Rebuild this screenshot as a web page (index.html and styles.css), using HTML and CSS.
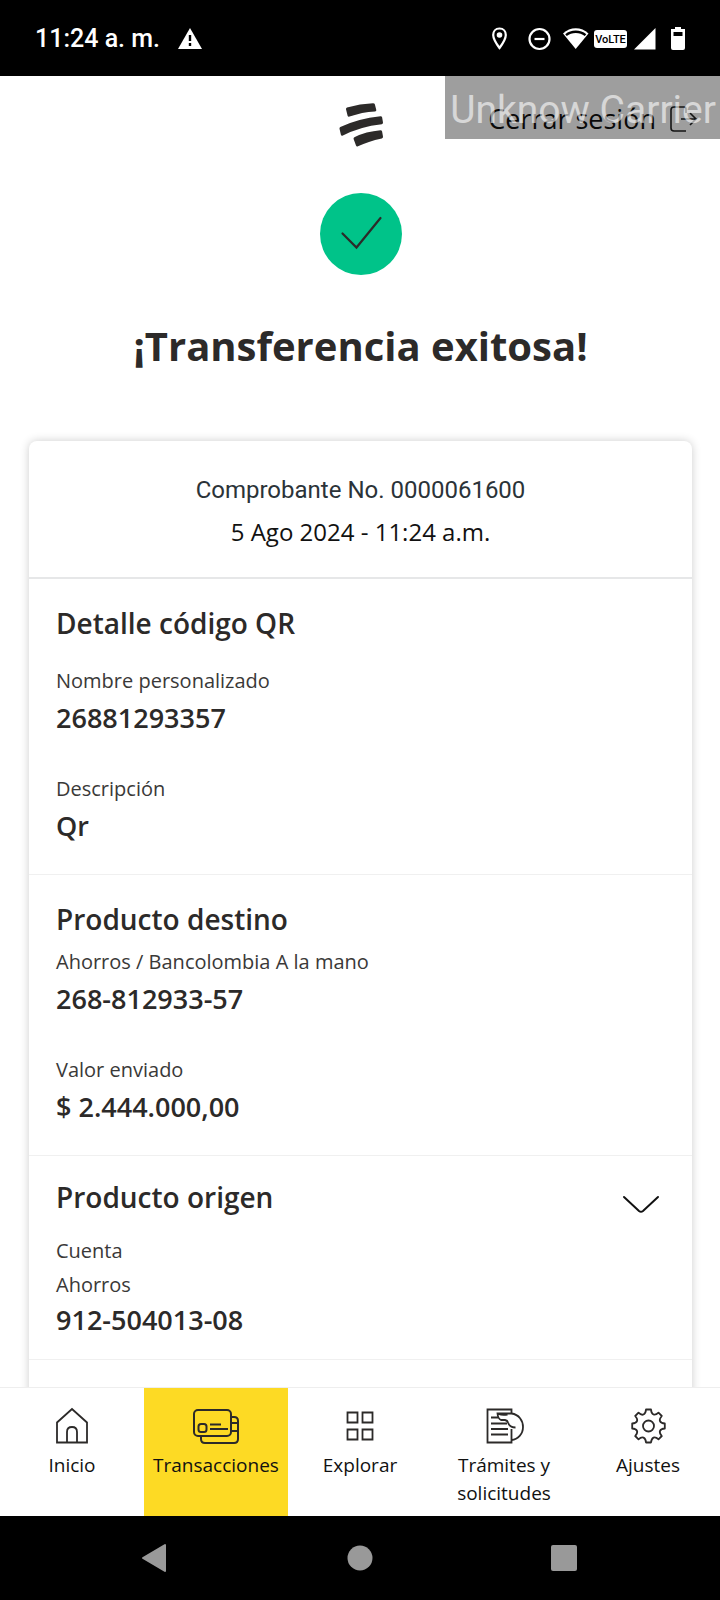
FILE: index.html
```html
<!DOCTYPE html>
<html lang="es">
<head>
<meta charset="utf-8">
<meta name="viewport" content="width=device-width, initial-scale=1">
<title>Transferencia exitosa</title>
<link rel="stylesheet" href="styles.css">
</head>
<body>
<div class="status-bar">
  <span class="status-time">11:24 a. m.</span>
  <svg class="status-warning" width="24" height="22" viewBox="0 0 24 22"><path d="M12 0L24 21H0Z" fill="#fff"/><path d="M12 7v6M12 15v3" stroke="#000" stroke-width="2.4"/></svg>
  <div class="status-icons">
    <svg width="164" height="24" viewBox="0 0 164 24" fill="none">
      <path d="M7.500 1.500C3.500 1.500 1.200 4.500 1.200 8c0 4.500 6.300 13 6.300 13s6.300-8.500 6.300-13c0-3.500-2.300-6.500-6.300-6.500z" stroke="#fff" stroke-width="2.200"/>
      <circle cx="7.500" cy="8" r="2.800" fill="#fff"/>
      <circle cx="47.500" cy="12" r="10" stroke="#fff" stroke-width="2.200"/><path d="M42.500 12h10" stroke="#fff" stroke-width="2.200"/>
      <path d="M71 6.500C78-.500 89.500-.500 96.500 6.500L83.700 22Z" fill="#fff"/><path d="M74 8.200C79.500 3.600 88 3.600 93.500 8.200" stroke="#000" stroke-width="2.400"/>
      <rect x="102" y="3" width="33" height="18" rx="3" fill="#fff"/>
      <text x="118.500" y="16" text-anchor="middle" class="volte" fill="#000">VoLTE</text>
      <path d="M142 22.500L163.500 1V22.500Z" fill="#fff"/>
    </svg>
    <svg width="14" height="24" viewBox="0 0 14 24"><path d="M4 0h6v2h4v19q0 2-2 2H2q-2 0-2-2V2h4z" fill="#fff"/><path d="M2.500 5h9v4h-9z" fill="#000"/></svg>
  </div>
</div>

<header class="app-header">
  <svg class="logo" width="46" height="46" viewBox="0 0 46 46" fill="#2c2a29">
    <path d="M9 5.500Q22 1.500 35 1.200Q36.600 1.200 36.900 2.500L38.300 8Q38.500 9.400 37 9.500Q24 10.200 11.500 14.600Q10 15 9.600 13.700L8 7.200Q7.800 6 9 5.500Z"/>
    <path d="M2.300 25Q20 16.500 42.500 14.200Q43.800 14.100 44.100 15.300L45 20.600Q45.200 22 43.800 22.200Q22 24.500 4.900 33.600Q3.300 34.300 2.900 32.800L1.500 26.700Q1.300 25.500 2.300 25Z"/>
    <path d="M16.400 35.200Q28 29.500 42.500 28.300Q43.800 28.300 44.100 29.400L45 34.600Q45.200 36 43.800 36.400Q30 39.400 20 44.300Q18.500 45 18 43.600L15.600 37Q15.300 35.800 16.400 35.200Z"/>
  </svg>
  <a class="logout" href="#">Cerrar sesión
    <svg width="28" height="28" viewBox="0 0 28 28" fill="none" stroke="#222" stroke-width="1.600"><path d="M16 8V4q0-2-2-2H4Q1 2 1 5v18q0 3 3 3h12M11 14h15M20 8l6 6-6 6"/></svg>
  </a>
  <div class="carrier">Unknow Carrier</div>
</header>

<main class="content">
  <svg class="success" width="82" height="82" viewBox="0 0 82 82"><circle cx="41" cy="41" r="41" fill="#00c389"/><path d="M22.500 40.500L36.500 54.500L60.500 25" fill="none" stroke="#2c2a29" stroke-width="2.200" stroke-linecap="round"/></svg>
  <h1 class="title">¡Transferencia exitosa!</h1>

  <article class="card">
    <div class="receipt">
      <p class="receipt-number">Comprobante No. 0000061600</p>
      <p class="receipt-date">5 Ago 2024 - 11:24 a.m.</p>
    </div>
    <section class="section">
      <h2 class="heading spaced">Detalle código QR</h2>
      <dl class="fields">
        <div><dt>Nombre personalizado</dt><dd>26881293357</dd></div>
        <div><dt>Descripción</dt><dd>Qr</dd></div>
      </dl>
    </section>
    <section class="section">
      <h2 class="heading">Producto destino</h2>
      <dl class="fields">
        <div><dt>Ahorros / Bancolombia A la mano</dt><dd>268-812933-57</dd></div>
        <div><dt>Valor enviado</dt><dd>$ 2.444.000,00</dd></div>
      </dl>
    </section>
    <section class="section origin">
      <div class="origin-head">
        <h2 class="heading">Producto origen</h2>
        <button class="toggle" type="button" aria-label="Ver detalle">
          <svg width="38" height="20" viewBox="0 0 38 20" fill="none" stroke="#111" stroke-width="2" stroke-linecap="round"><path d="M2 2l15 14q2 1.600 4 0L36 2"/></svg>
        </button>
      </div>
      <p class="origin-line">Cuenta</p>
      <p class="origin-line">Ahorros</p>
      <p class="value">912-504013-08</p>
    </section>
    <section class="section"></section>
  </article>
</main>

<nav class="tabs">
  <a class="tab" href="#">
    <svg width="40" height="40" viewBox="0 0 40 40" class="icon"><path d="M5 36.500V16.500L20 3l15 13.500v20zM15 36.500V26q0-5 5-5t5 5v10.500"/></svg>
    <span>Inicio</span>
  </a>
  <a class="tab active" href="#" aria-current="page">
    <svg width="48" height="40" viewBox="0 0 48 40" class="icon"><g stroke-width="2"><rect x="2" y="4" width="37" height="26" rx="4"/><path d="M39 11h3q4 0 4 4v18q0 4-4 4H13q-4 0-4-4v-3M39 17h7M39 25h7"/><rect x="6.500" y="18" width="8" height="8" rx="2.500"/><path d="M18 18.500h11M18 23h18"/></g></svg>
    <span>Transacciones</span>
  </a>
  <a class="tab" href="#">
    <svg width="40" height="40" viewBox="0 0 40 40" class="icon"><path d="M7.500 6.500h10v10h-10zM22.500 6.500h10v10h-10zM7.500 23.500h10v10h-10zM22.500 23.500h10v10h-10z"/></svg>
    <span>Explorar</span>
  </a>
  <a class="tab" href="#">
    <svg width="40" height="40" viewBox="0 0 40 40" class="icon"><path d="M27.500 7V3.500h-24v33h24V23M7 11.500h7M7 17.500h16M7 23h17M7 28.500h17"/><path d="M31.500 21.500q-6 0-7.500-5-.5-2-3-2.500h-4q-3-1-3.500-6.500h14C35 8.500 39 14.500 39 21c0 7-5 12.500-11.500 13M14.500 8q4 1.500 9 .500"/></svg>
    <span>Trámites y solicitudes</span>
  </a>
  <a class="tab" href="#">
    <svg width="40" height="40" viewBox="0 0 40 40" class="icon"><circle cx="20.500" cy="20" r="5.500"/><path d="M18 3.500h5q.3 4.200 2.500 5t5-1.800l3.300 3.300q-2.700 3-1.800 5.200t4.800 2.300v5q-3.900.3-4.800 2.400t1.800 5.100l-3.300 3.300q-3-2.600-5-1.700T23 36.500h-5q-.3-4-2.500-4.900t-5 1.700l-3.300-3.300q2.700-3 1.800-5.100t-4.800-2.400v-5q3.900-.1 4.800-2.300t-1.800-5.200l3.300-3.300q2.800 2.700 5 1.800T18 3.500z" stroke-linejoin="round"/></svg>
    <span>Ajustes</span>
  </a>
</nav>

<div class="system-nav">
  <button type="button" aria-label="Atrás"><svg width="26" height="30" viewBox="0 0 26 30"><path d="M24 2v26L2 15z" fill="#999" stroke="#999" stroke-width="2" stroke-linejoin="round"/></svg></button>
  <button type="button" aria-label="Inicio del sistema"><svg width="26" height="26" viewBox="0 0 26 26"><circle cx="13" cy="13" r="12.500" fill="#999"/></svg></button>
  <button type="button" aria-label="Recientes"><svg width="28" height="28" viewBox="0 0 28 28"><rect x="1" y="1" width="26" height="26" rx="2" fill="#999"/></svg></button>
</div>
</body>
</html>
```
FILE: styles.css
```css
* { box-sizing: border-box; }

body {
  margin: 0;
  height: 100vh;
  display: flex;
  flex-direction: column;
  background: #fff;
  color: #2c2a29;
  font-family: "Open Sans", "Noto Sans", sans-serif;
}

h1, h2, p, dl, dd { margin: 0; }

button {
  border: 0;
  padding: 0;
  background: none;
}

svg {
  display: block;
  flex: none;
}

.status-bar {
  flex: none;
  display: flex;
  align-items: center;
  height: 76px;
  padding: 2px 35px 0;
  background: #000;
  color: #fff;
}

.status-time {
  font: 500 25px/30px Roboto, sans-serif;
}

.status-warning { margin-left: 18px; }

.status-icons {
  display: flex;
  gap: 15px;
  margin-left: auto;
}

.volte {
  font: 500 11px Roboto, sans-serif;
}

.app-header {
  position: relative;
  flex: none;
  display: grid;
  grid-template-columns: 1fr auto 1fr;
  align-items: start;
  padding: 26px 22px 0 23px;
}

.logo { grid-column: 2; }

.logout {
  justify-self: end;
  display: flex;
  align-items: center;
  gap: 14px;
  color: #111;
  font-size: 27px;
  line-height: 34px;
  text-decoration: none;
  white-space: nowrap;
}

.carrier {
  position: absolute;
  top: 0;
  right: 0;
  padding: 13px 4px 8px 5px;
  background: rgba(0, 0, 0, 0.38);
  color: rgba(255, 255, 255, 0.6);
  font: 400 39px/42px Roboto, sans-serif;
  white-space: nowrap;
}

.content {
  flex: 1;
  min-height: 0;
  overflow: hidden;
  display: flex;
  flex-direction: column;
  align-items: center;
  padding: 45px 28px 0 29px;
}

.title {
  margin: 41px 0 65px;
  font-size: 40px;
  font-weight: 700;
  line-height: 60px;
}

.card {
  flex: none;
  align-self: stretch;
  border-radius: 8px;
  box-shadow: 0 0 10px rgba(0, 0, 0, 0.2);
}

.receipt {
  padding: 28px 28px 24px;
  border-bottom: 2px solid #e6e7e8;
  text-align: center;
  font-size: 24px;
  line-height: 42px;
}

.receipt-number {
  color: #2b3338;
  font-family: Roboto, sans-serif;
}

.receipt-date { color: #111; }

.section {
  padding: 26px 27px 29px;
  border-bottom: 1px solid #f0f0f0;
}

.section:last-child { border-bottom: 0; }

.heading {
  margin-bottom: 9px;
  font-size: 28px;
  font-weight: 600;
  line-height: 36px;
}

.spaced { margin-bottom: 24px; }

.fields {
  display: grid;
  gap: 36px;
}

dt, .origin-line {
  color: #3a3938;
  font-size: 20px;
  line-height: 32px;
}

dd, .value {
  font-size: 27px;
  font-weight: 600;
  line-height: 38px;
}

dd { margin-top: 2px; }

.origin {
  display: grid;
  gap: 2px;
  padding-top: 23px;
  padding-bottom: 20px;
}

.origin-head {
  display: flex;
  justify-content: space-between;
  align-items: center;
  margin-bottom: 9px;
}

.toggle { padding: 6px 5px 0 0; }

.origin .value { margin-top: -2px; }

.tabs {
  position: relative;
  flex: none;
  display: grid;
  grid-template-columns: repeat(5, minmax(0, 1fr));
  border-top: 1px solid #eee;
  background: #fff;
}

.tab {
  display: flex;
  flex-direction: column;
  align-items: center;
  gap: 5px;
  padding: 18px 4px 9px;
  color: #111;
  font-size: 19px;
  line-height: 28px;
  text-align: center;
  text-decoration: none;
}

.active { background: #fdda24; }

.icon {
  fill: none;
  stroke: #2c2a29;
  stroke-width: 1.8;
}

.system-nav {
  flex: none;
  display: grid;
  grid-template-columns: 1fr auto 1fr;
  align-items: center;
  height: 84px;
  padding: 0 142px 0 141px;
  background: #000;
}

.system-nav button:last-child { justify-self: end; }
```
